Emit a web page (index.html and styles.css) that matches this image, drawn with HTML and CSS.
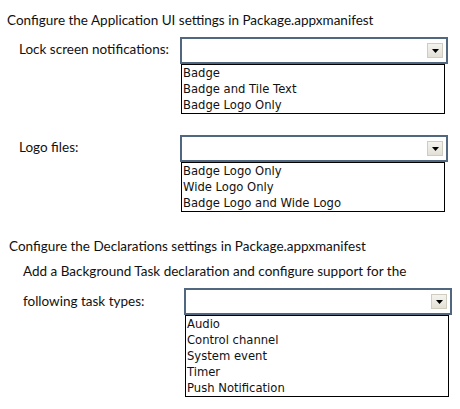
FILE: index.html
```html
<!DOCTYPE html>
<html lang="en">
<head>
    <meta charset="UTF-8">
    <meta name="viewport" content="width=device-width, initial-scale=1.0">
    <title>Package.appxmanifest settings</title>
    <link rel="stylesheet" href="styles.css">
</head>
<body>
    <div class="page">
        <p class="heading">Configure the Application UI settings in Package.appxmanifest</p>

        <div class="field field-lock">
            <span class="label">Lock screen notifications:</span>
            <div class="combo-wrap">
                <div class="combo">
                    <span class="combo-value"></span>
                    <span class="combo-btn">
                        <svg width="7" height="4" viewBox="0 0 7 4"><path d="M0 0h7L3.5 4z" fill="#000"/></svg>
                    </span>
                </div>
                <ul class="options">
                    <li>Badge</li>
                    <li>Badge and Tile Text</li>
                    <li>Badge Logo Only</li>
                </ul>
            </div>
        </div>

        <div class="field field-logo">
            <span class="label">Logo files:</span>
            <div class="combo-wrap">
                <div class="combo">
                    <span class="combo-value"></span>
                    <span class="combo-btn">
                        <svg width="7" height="4" viewBox="0 0 7 4"><path d="M0 0h7L3.5 4z" fill="#000"/></svg>
                    </span>
                </div>
                <ul class="options">
                    <li>Badge Logo Only</li>
                    <li>Wide Logo Only</li>
                    <li>Badge Logo and Wide Logo</li>
                </ul>
            </div>
        </div>

        <p class="heading heading-decl">Configure the Declarations settings in Package.appxmanifest</p>
        <p class="subheading">Add a Background Task declaration and configure support for the</p>

        <div class="field field-task">
            <span class="label">following task types:</span>
            <div class="combo-wrap">
                <div class="combo">
                    <span class="combo-value"></span>
                    <span class="combo-btn">
                        <svg width="7" height="4" viewBox="0 0 7 4"><path d="M0 0h7L3.5 4z" fill="#000"/></svg>
                    </span>
                </div>
                <ul class="options">
                    <li>Audio</li>
                    <li>Control channel</li>
                    <li>System event</li>
                    <li>Timer</li>
                    <li>Push Notification</li>
                </ul>
            </div>
        </div>
    </div>
</body>
</html>
```

FILE: styles.css
```css
* {
    margin: 0;
    padding: 0;
    box-sizing: border-box;
}

body {
    background: #fff;
    font-family: Lato, 'Open Sans', sans-serif;
    font-size: 13.5px;
    color: #111;
}

.page {
    width: 460px;
    height: 409px;
}

.heading {
    margin: 10px 0 0 7px;
    line-height: 20px;
}

.heading-decl {
    margin: 24px 0 0 9px;
}

.subheading {
    margin: 5px 0 0 23px;
    line-height: 20px;
}

.field {
    display: flex;
    align-items: flex-start;
}

.field-lock {
    margin-top: 7px;
}

.field-logo {
    margin-top: 21px;
}

.field-task {
    margin-top: 7px;
}

.label {
    width: 180px;
    padding: 3px 0 0 19px;
    line-height: 18px;
}

.field-task .label {
    width: 184px;
    padding-left: 23px;
    padding-top: 4px;
}

.combo-wrap {
    width: 268px;
}

.combo {
    height: 27px;
    border: 2px solid #50677f;
    background: #fff;
    display: flex;
    align-items: center;
    justify-content: flex-end;
    padding-right: 3px;
}

.combo-btn {
    width: 16px;
    height: 15px;
    background: linear-gradient(#f4f3ee, #e3e1d6);
    border: 1px solid #cfcdc2;
    display: flex;
    align-items: center;
    justify-content: center;
}

.options {
    list-style: none;
    width: 264px;
    margin-left: 1px;
    border: 1px solid #000;
    background: #fff;
    font-family: 'DejaVu Sans', Verdana, sans-serif;
    font-size: 11.6px;
}

.options li {
    height: 16px;
    line-height: 16px;
    padding-left: 1px;
    color: #111;
}
```
